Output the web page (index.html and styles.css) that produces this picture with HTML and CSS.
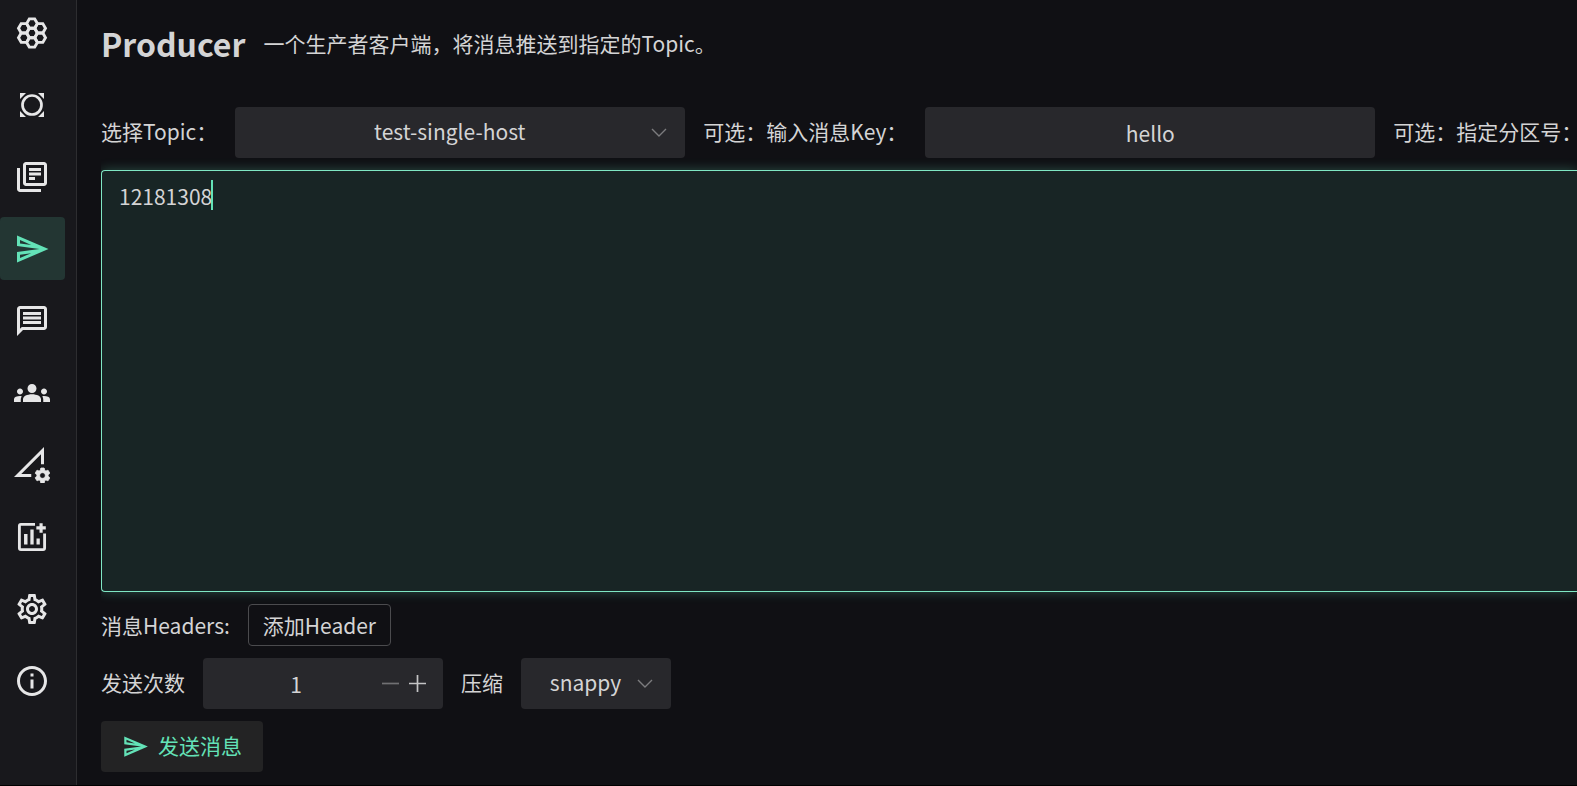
FILE: index.html
```html
<!DOCTYPE html>
<html lang="zh-CN">
<head>
<meta charset="utf-8">
<title>Producer</title>
<link rel="stylesheet" href="styles.css">
</head>
<body>
<div class="app">
  <nav class="sidebar" aria-label="主导航">
    <a class="nav-item" href="#" aria-label="集群">
      <svg class="icon" viewBox="0 0 36 36" fill="none" stroke="currentColor" stroke-width="2.9">
        <defs><path id="hex" d="M-5.4 0L-2.7-4.68H2.7L5.4 0L2.7 4.68H-2.7Z"/></defs>
        <use href="#hex" x="18" y="18"/><use href="#hex" x="18" y="8.6"/><use href="#hex" x="18" y="27.4"/>
        <use href="#hex" x="9.9" y="13.3"/><use href="#hex" x="9.9" y="22.7"/>
        <use href="#hex" x="26.1" y="13.3"/><use href="#hex" x="26.1" y="22.7"/>
      </svg>
    </a>
    <a class="nav-item" href="#" aria-label="节点">
      <svg class="icon" viewBox="0 0 36 36"><circle cx="18" cy="18" r="9.5" fill="none" stroke="currentColor" stroke-width="2.7"/><path d="M6 6h6L6 12zM30 6v6L24 6zM6 30v-6l6 6zM30 30h-6l6-6z"/></svg>
    </a>
    <a class="nav-item" href="#" aria-label="主题">
      <svg class="icon" viewBox="0 0 24 24"><path d="M4 6H2v14c0 1.1.9 2 2 2h14v-2H4V6zm16-4H8c-1.1 0-2 .9-2 2v12c0 1.1.9 2 2 2h12c1.1 0 2-.9 2-2V4c0-1.1-.9-2-2-2zm0 14H8V4h12v12zM10 9h8v2h-8zm0 3h4v2h-4zm0-6h8v2h-8z"/></svg>
    </a>
    <a class="nav-item active" href="#" aria-label="生产者" aria-current="page">
      <svg class="icon" viewBox="0 0 24 24"><path id="send" d="M4 6.03l7.51 3.22-7.52-1L4 6.03m7.5 8.72L4 17.97v-2.22l7.5-1M2.01 3L2 10l15 2-15 2 .01 7L23 12 2.01 3z"/></svg>
    </a>
    <a class="nav-item" href="#" aria-label="消费者">
      <svg class="icon" viewBox="0 0 24 24"><path d="M4 4h16v12H5.17L4 17.17V4m0-2c-1.1 0-1.99.9-1.99 2L2 22l4-4h14c1.1 0 2-.9 2-2V4c0-1.1-.9-2-2-2H4zm2 10h12v2H6v-2zm0-3h12v2H6V9zm0-3h12v2H6V6z"/></svg>
    </a>
    <a class="nav-item" href="#" aria-label="消费组">
      <svg class="icon" viewBox="0 0 24 24"><path d="M12 12.75c1.63 0 3.07.39 4.24.9 1.08.48 1.76 1.56 1.76 2.73V18H6v-1.61c0-1.18.68-2.26 1.76-2.73 1.17-.52 2.61-.91 4.24-.91zM4 13c1.1 0 2-.9 2-2s-.9-2-2-2-2 .9-2 2 .9 2 2 2zm1.13 1.1c-.37-.06-.74-.1-1.13-.1-.99 0-1.93.21-2.78.58C.48 14.9 0 15.62 0 16.43V18h4.5v-1.61c0-.83.23-1.61.63-2.29zM20 13c1.1 0 2-.9 2-2s-.9-2-2-2-2 .9-2 2 .9 2 2 2zm4 3.43c0-.81-.48-1.53-1.22-1.85-.85-.37-1.79-.58-2.78-.58-.39 0-.76.04-1.13.1.4.68.63 1.46.63 2.29V18H24v-1.57zM12 6c1.66 0 3 1.34 3 3s-1.34 3-3 3-3-1.34-3-3 1.34-3 3-3z"/></svg>
    </a>
    <a class="nav-item" href="#" aria-label="巡检">
      <svg class="icon" viewBox="0 0 24 24"><path d="M20 0L0 20h11.5v-2H4.83L18 4.83v6.67h2V0z"/><path transform="translate(12.76 12.76) scale(.52)" stroke="currentColor" d="M19.14 12.94c.04-.3.06-.61.06-.94 0-.32-.02-.64-.07-.94l2.03-1.58c.18-.14.23-.41.12-.61l-1.92-3.32c-.12-.22-.37-.29-.59-.22l-2.39.96c-.5-.38-1.03-.7-1.62-.94l-.36-2.54c-.04-.24-.24-.41-.48-.41h-3.84c-.24 0-.43.17-.47.41l-.36 2.54c-.59.24-1.13.57-1.62.94l-2.39-.96c-.22-.08-.47 0-.59.22L2.74 8.87c-.12.21-.08.47.12.61l2.03 1.58c-.05.3-.09.63-.09.94s.02.64.07.94l-2.03 1.58c-.18.14-.23.41-.12.61l1.92 3.32c.12.22.37.29.59.22l2.39-.96c.5.38 1.03.7 1.62.94l.36 2.54c.05.24.24.41.48.41h3.84c.24 0 .44-.17.47-.41l.36-2.54c.59-.24 1.13-.56 1.62-.94l2.39.96c.22.08.47 0 .59-.22l1.92-3.32c.12-.22.07-.47-.12-.61l-2.01-1.58zM12 15.6c-1.98 0-3.6-1.62-3.6-3.6s1.62-3.6 3.6-3.6 3.6 1.62 3.6 3.6-1.62 3.6-3.6 3.6z"/></svg>
    </a>
    <a class="nav-item" href="#" aria-label="监控">
      <svg class="icon" viewBox="0 0 24 24"><path fill="none" stroke="currentColor" stroke-width="1.9" d="M14 3.6H4.6a1 1 0 0 0-1 1v14.8a1 1 0 0 0 1 1h14.8a1 1 0 0 0 1-1V9.7"/><path d="M6.7 10H9v7H6.7zM10.9 7h2.2v10h-2.2zM15 13h2.2v4H15zM17 2.9h2.1v2h2.1V7h-2.1v2.1H17V7h-2.1V4.900H17z"/></svg>
    </a>
    <a class="nav-item" href="#" aria-label="设置">
      <svg class="icon" viewBox="0 0 24 24"><path d="M19.43 12.98c.04-.32.07-.64.07-.98 0-.34-.03-.66-.07-.98l2.11-1.65c.19-.15.24-.42.12-.64l-2-3.46c-.09-.16-.26-.25-.44-.25-.06 0-.12.01-.17.03l-2.49 1c-.52-.4-1.08-.73-1.69-.98l-.38-2.65C14.46 2.18 14.25 2 14 2h-4c-.25 0-.46.18-.49.42l-.38 2.65c-.61.25-1.17.59-1.69.98l-2.49-1c-.06-.02-.12-.03-.18-.03-.17 0-.34.09-.43.25l-2 3.46c-.13.22-.07.49.12.64l2.11 1.65c-.04.32-.07.65-.07.98 0 .33.03.66.07.98l-2.11 1.65c-.19.15-.24.42-.12.64l2 3.46c.09.16.26.25.44.25.06 0 .12-.01.17-.03l2.49-1c.52.4 1.08.73 1.69.98l.38 2.65c.03.24.24.42.49.42h4c.25 0 .46-.18.49-.42l.38-2.65c.61-.25 1.17-.59 1.69-.98l2.49 1c.06.02.12.03.18.03.17 0 .34-.09.43-.25l2-3.46c.12-.22.07-.49-.12-.64l-2.11-1.65zm-1.98-1.71c.04.31.05.52.05.73 0 .21-.02.43-.05.73l-.14 1.13.89.7 1.08.84-.7 1.21-1.27-.51-1.04-.42-.9.68c-.43.32-.84.56-1.25.73l-1.06.43-.16 1.13-.2 1.35h-1.4l-.19-1.35-.16-1.13-1.06-.43c-.43-.18-.83-.41-1.23-.71l-.91-.7-1.06.43-1.27.51-.7-1.21 1.08-.84.89-.7-.14-1.13c-.03-.31-.05-.54-.05-.74s.02-.43.05-.73l.14-1.13-.89-.7-1.08-.84.7-1.21 1.27.51 1.04.42.9-.68c.43-.32.84-.56 1.25-.73l1.06-.43.16-1.13.2-1.35h1.39l.19 1.35.16 1.13 1.06.43c.43.18.83.41 1.23.71l.91.7 1.06-.43 1.27-.51.7 1.21-1.07.85-.89.7.14 1.13zM12 8c-2.21 0-4 1.79-4 4s1.79 4 4 4 4-1.79 4-4-1.79-4-4-4zm0 6c-1.1 0-2-.9-2-2s.9-2 2-2 2 .9 2 2-.9 2-2 2z"/></svg>
    </a>
    <a class="nav-item" href="#" aria-label="关于">
      <svg class="icon" viewBox="0 0 24 24"><path d="M11 7h2v2h-2zm0 4h2v6h-2zm1-9C6.480 2 2 6.480 2 12s4.480 10 10 10 10-4.480 10-10S17.520 2 12 2zm0 18c-4.410 0-8-3.590-8-8s3.590-8 8-8 8 3.590 8 8-3.590 8-8 8z"/></svg>
    </a>
  </nav>

  <main class="main">
    <header class="page-head">
      <h1 class="title">Producer</h1>
      <p class="subtitle">一个生产者客户端，将消息推送到指定的Topic。</p>
    </header>

    <form class="form">
      <div class="row">
        <label class="label" for="topic">选择Topic：</label>
        <div class="select-wrap wide">
          <select class="field" id="topic"><option>test-single-host</option></select>
          <svg class="chevron" viewBox="0 0 16 10"><path d="M1 1l7 7 7-7"/></svg>
        </div>
        <label class="label" for="key">可选：输入消息Key：</label>
        <input class="field wide" id="key" type="text" value="hello">
        <span class="label">可选：指定分区号：</span>
      </div>

      <div class="message">
        <textarea class="message-text" aria-label="消息内容" spellcheck="false">12181308</textarea>
        <span class="caret"></span>
      </div>

      <div class="row">
        <span>消息Headers:</span>
        <button class="btn-outline" type="button">添加Header</button>
      </div>

      <div class="row">
        <label class="label" for="times">发送次数</label>
        <div class="number">
          <input class="number-input" id="times" type="number" value="1" min="1">
          <button class="step muted" type="button" aria-label="减少"><svg viewBox="0 0 17 17"><path d="M0 8.5h17"/></svg></button>
          <button class="step" type="button" aria-label="增加"><svg viewBox="0 0 17 17"><path d="M0 8.5h17M8.5 0v17"/></svg></button>
        </div>
        <label class="label" for="compress">压缩</label>
        <div class="select-wrap narrow">
          <select class="field" id="compress"><option>snappy</option></select>
          <svg class="chevron" viewBox="0 0 16 10"><path d="M1 1l7 7 7-7"/></svg>
        </div>
      </div>

      <div class="row">
        <button class="btn-send" type="button">
          <svg class="send-icon" viewBox="0 0 24 24"><use href="#send"/></svg>
          <span class="label">发送消息</span>
        </button>
      </div>
    </form>
  </main>
</div>
</body>
</html>
```
FILE: styles.css
```css
* { box-sizing: border-box; }

body {
  margin: 0;
  background: #101014;
  color: #d4d4d5;
  font: 21px/32px "Noto Sans CJK SC", "Noto Sans", sans-serif;
}

button, input, select, textarea {
  margin: 0;
  font: inherit;
  color: inherit;
  border: 0;
  outline: 0;
}

button { cursor: pointer; }

.app {
  display: flex;
  min-height: 100vh;
  border-bottom: 1px solid #000;
  overflow: hidden;
}

.sidebar {
  flex: none;
  width: 77px;
  padding-top: 1px;
  display: flex;
  flex-direction: column;
  gap: 9px;
  background: #18181c;
  border-right: 1px solid #2d2d30;
}

.nav-item {
  width: 65px;
  height: 63px;
  padding-left: 14px;
  display: flex;
  align-items: center;
  border-radius: 4px;
  color: #e6e6e7;
}

.nav-item.active {
  background: #233633;
  color: #63e2b7;
}

.icon {
  width: 36px;
  height: 36px;
  fill: currentColor;
}

.icon[fill="none"] { fill: none; }

.main {
  flex: 1;
  min-width: 0;
  padding: 16px 0 13px 24px;
  display: flex;
  flex-direction: column;
  gap: 37px;
}

.page-head {
  display: flex;
  align-items: center;
  gap: 18px;
  height: 54px;
}

.title {
  margin: 0;
  font-size: 32px;
  line-height: 54px;
  font-weight: 700;
}

.subtitle { margin: 0; }

.form {
  flex: 1;
  display: flex;
  flex-direction: column;
  gap: 12px;
  overflow: hidden;
}

.row {
  display: flex;
  align-items: center;
  gap: 18px;
  white-space: nowrap;
}

.row > * { flex: none; }

.label { padding-bottom: 3px; }

.field {
  height: 51px;
  padding: 0 18px;
  background: #28282c;
  border-radius: 4px;
  text-align: center;
}

.wide { width: 450px; }
.narrow { width: 150px; }

.select-wrap { position: relative; }

.select-wrap .field {
  display: block;
  width: 100%;
  padding: 0 39px 3px 18px;
  appearance: none;
  text-align-last: center;
}

.chevron {
  position: absolute;
  right: 18px;
  top: 21px;
  width: 16px;
  height: 10px;
  fill: none;
  stroke: #7c7c7e;
  stroke-width: 1.4;
  pointer-events: none;
}

.message {
  position: relative;
  flex: 1;
  min-height: 150px;
  display: flex;
}

.message-text {
  flex: 1;
  padding: 10px 17px;
  line-height: 30px;
  resize: none;
  background: #182525;
  border: 1px solid #7fe7c4;
  border-right: 0;
  border-radius: 4px 0 0 4px;
  box-shadow: 0 0 12px rgba(99, 226, 183, 0.3);
  caret-color: transparent;
}

.caret {
  position: absolute;
  left: 110px;
  top: 10px;
  width: 2px;
  height: 30px;
  background: #63e2b7;
}

.btn-outline {
  height: 42px;
  padding: 0 14px;
  background: transparent;
  border: 1px solid #4b4b4e;
  border-radius: 4px;
}

.number {
  width: 240px;
  height: 51px;
  padding: 0 12px 0 18px;
  display: flex;
  align-items: center;
  background: #28282c;
  border-radius: 4px;
}

.number-input {
  width: 150px;
  margin-right: auto;
  padding: 0;
  background: transparent;
  text-align: center;
  appearance: textfield;
}

.number-input::-webkit-inner-spin-button { appearance: none; margin: 0; }

.step {
  width: 27px;
  height: 27px;
  padding: 5px;
  background: transparent;
  color: #c4c4c5;
}

.step.muted { color: #707073; }

.step svg {
  display: block;
  width: 17px;
  height: 17px;
  stroke: currentColor;
  stroke-width: 1.7;
}

.btn-send {
  height: 51px;
  padding: 0 21px;
  display: flex;
  align-items: center;
  gap: 9px;
  background: #232324;
  border-radius: 4px;
  color: #63e2b7;
}

.send-icon {
  width: 27px;
  height: 27px;
  fill: currentColor;
}
```
